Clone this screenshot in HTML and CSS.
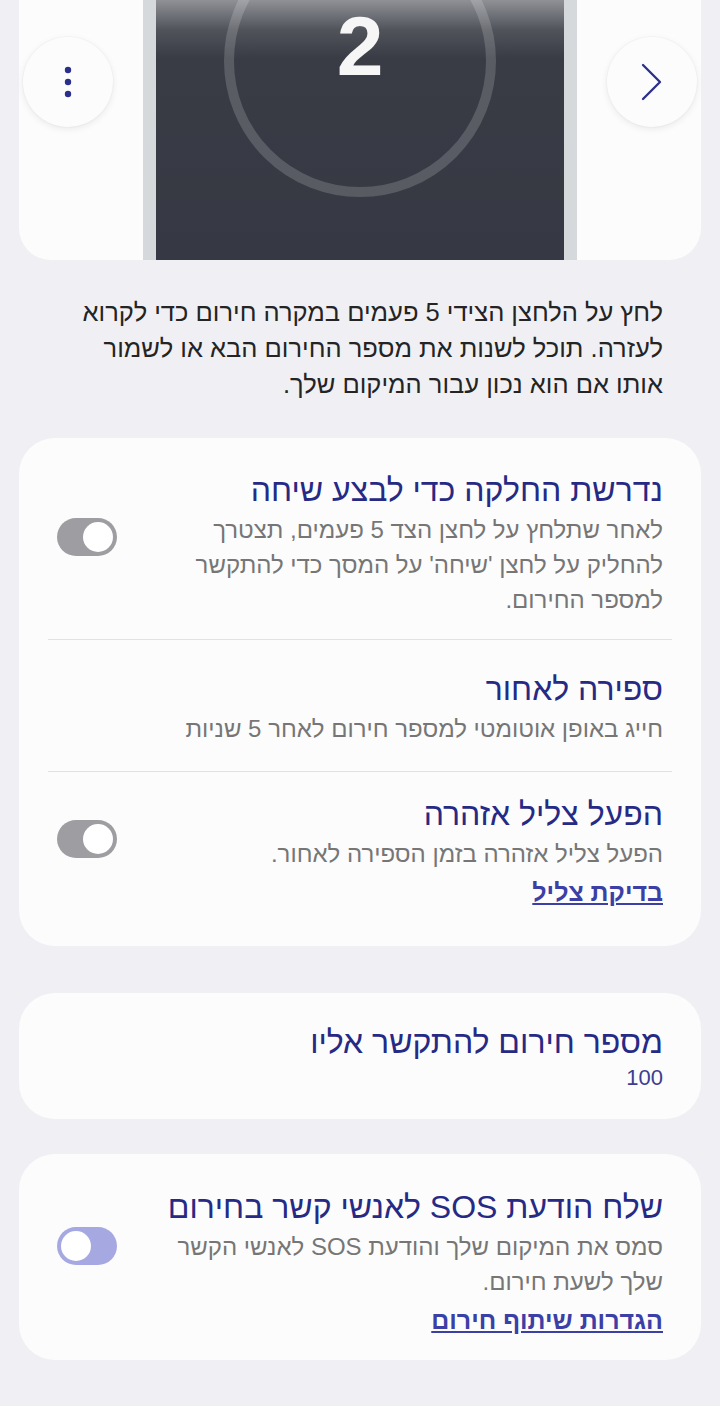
FILE: index.html
```html
<!DOCTYPE html>
<html lang="he" dir="rtl">
<head>
<meta charset="utf-8">
<title>SOS</title>
<link rel="stylesheet" href="styles.css">
</head>
<body>
<div class="top-card">
  <div class="round-btn">
    <svg width="24" height="40" viewBox="0 0 24 40"><path d="M3 3 L20 20 L3 37" fill="none" stroke="#2b2f8c" stroke-width="2.3" stroke-linecap="round" stroke-linejoin="round"/></svg>
  </div>
  <div class="phone">
    <div class="screen">
      <div class="ring"><div class="count">2</div></div>
    </div>
  </div>
  <div class="round-btn">
    <svg width="10" height="34" viewBox="0 0 10 34"><circle cx="5" cy="5" r="3.2" fill="#2b2f8c"/><circle cx="5" cy="17" r="3.2" fill="#2b2f8c"/><circle cx="5" cy="29" r="3.2" fill="#2b2f8c"/></svg>
  </div>
</div>

<p class="intro">לחץ על הלחצן הצידי 5 פעמים במקרה חירום כדי לקרוא לעזרה. תוכל לשנות את מספר החירום הבא או לשמור אותו אם הוא נכון עבור המיקום שלך.</p>

<div class="card card-settings">
  <div class="row row-a">
    <div class="text">
      <div class="title">נדרשת החלקה כדי לבצע שיחה</div>
      <div class="desc">לאחר שתלחץ על לחצן הצד 5 פעמים, תצטרך להחליק על לחצן 'שיחה' על המסך כדי להתקשר למספר החירום.</div>
    </div>
    <div class="switch off"><span class="knob"></span></div>
  </div>
  <div class="row row-b">
    <div class="text">
      <div class="title">ספירה לאחור</div>
      <div class="desc">חייג באופן אוטומטי למספר חירום לאחר 5 שניות</div>
    </div>
  </div>
  <div class="row row-c">
    <div class="text">
      <div class="title">הפעל צליל אזהרה</div>
      <div class="desc">הפעל צליל אזהרה בזמן הספירה לאחור.</div>
      <a class="link">בדיקת צליל</a>
    </div>
    <div class="switch off"><span class="knob"></span></div>
  </div>
</div>

<div class="card card-number">
  <div class="row row-num">
    <div class="text">
      <div class="title">מספר חירום להתקשר אליו</div>
      <div class="value">100</div>
    </div>
  </div>
</div>

<div class="card card-sos">
  <div class="row row-sos">
    <div class="text">
      <div class="title">שלח הודעת SOS לאנשי קשר בחירום</div>
      <div class="desc">סמס את המיקום שלך והודעת SOS לאנשי הקשר שלך לשעת חירום.</div>
      <a class="link">הגדרות שיתוף חירום</a>
    </div>
    <div class="switch on"><span class="knob"></span></div>
  </div>
</div>
</body>
</html>
```

FILE: styles.css
```css
* { box-sizing: border-box; }
html, body { margin: 0; padding: 0; }
body {
  background: #f0f0f4;
  font-family: "Liberation Sans", "DejaVu Sans", sans-serif;
  width: 720px;
  height: 1406px;
  overflow: hidden;
}

.top-card {
  margin: 0 19px;
  height: 260px;
  background: #fcfcfc;
  border-radius: 0 0 32px 32px;
  display: flex;
  justify-content: space-between;
  padding: 0 4px;
}
.round-btn {
  width: 90px;
  height: 90px;
  margin-top: 37px;
  border-radius: 50%;
  background: #fcfcfc;
  box-shadow: 0 2px 7px rgba(0, 0, 0, 0.08), 0 0 0 1px rgba(0, 0, 0, 0.02);
  display: flex;
  align-items: center;
  justify-content: center;
  flex-shrink: 0;
}
.phone {
  width: 434px;
  height: 260px;
  background: #d6d9dc;
  padding: 0 13px;
  flex-shrink: 0;
}
.screen {
  height: 100%;
  background: linear-gradient(#8f9196 0, #50535a 30px, #393c45 58px, #363943 100%);
  overflow: hidden;
  display: flex;
  justify-content: center;
}
.ring {
  width: 272px;
  height: 272px;
  flex-shrink: 0;
  margin-top: -75px;
  border: 10px solid rgba(255, 255, 255, 0.17);
  border-radius: 50%;
  text-align: center;
}
.count {
  padding-top: 69px;
  font-size: 84px;
  line-height: 1;
  font-weight: 700;
  color: #f6f6f6;
}

.intro {
  margin: 34px 57px 36px 64px;
  font-size: 25.5px;
  line-height: 36px;
  color: #242424;
}

.card {
  margin: 0 19px;
  background: #fcfcfc;
  border-radius: 36px;
  padding: 0 29px;
}
.card-number { margin-top: 47px; }
.card-sos { margin-top: 35px; }

.row {
  display: flex;
  align-items: center;
  padding: 0 9px;
}
.row + .row { border-top: 1px solid #e2e2e5; }
.row-a { padding-top: 30px; padding-bottom: 22px; }
.row-b { padding-top: 27px; padding-bottom: 25px; }
.row-c { padding-top: 20px; padding-bottom: 35px; }
.row-num { padding-top: 27px; padding-bottom: 27px; }
.row-sos { padding-top: 31px; padding-bottom: 21px; }

.text { flex: 1; min-width: 0; }
.title {
  font-size: 32px;
  line-height: 44px;
  color: #262a85;
}
.desc {
  font-size: 24px;
  line-height: 35px;
  color: #767676;
}
.value {
  font-size: 22px;
  line-height: 28px;
  color: #3b3f92;
}
.link {
  display: inline-block;
  margin-top: 2px;
  font-size: 25px;
  line-height: 38px;
  font-weight: 700;
  color: #3b3fa6;
  text-decoration: underline;
}

.switch {
  width: 60px;
  height: 38px;
  border-radius: 19px;
  margin-inline-start: 32px;
  margin-bottom: 26px;
  flex-shrink: 0;
  display: flex;
  align-items: center;
  padding: 0 4px;
}
.row-a .switch { margin-bottom: 12px; }
.row-sos .switch { margin-bottom: 32px; }
.switch.off { background: #9e9ea2; justify-content: flex-start; }
.switch.on { background: #a6a8e2; justify-content: flex-end; }
.knob {
  width: 30px;
  height: 30px;
  border-radius: 50%;
  background: #ffffff;
}
```
